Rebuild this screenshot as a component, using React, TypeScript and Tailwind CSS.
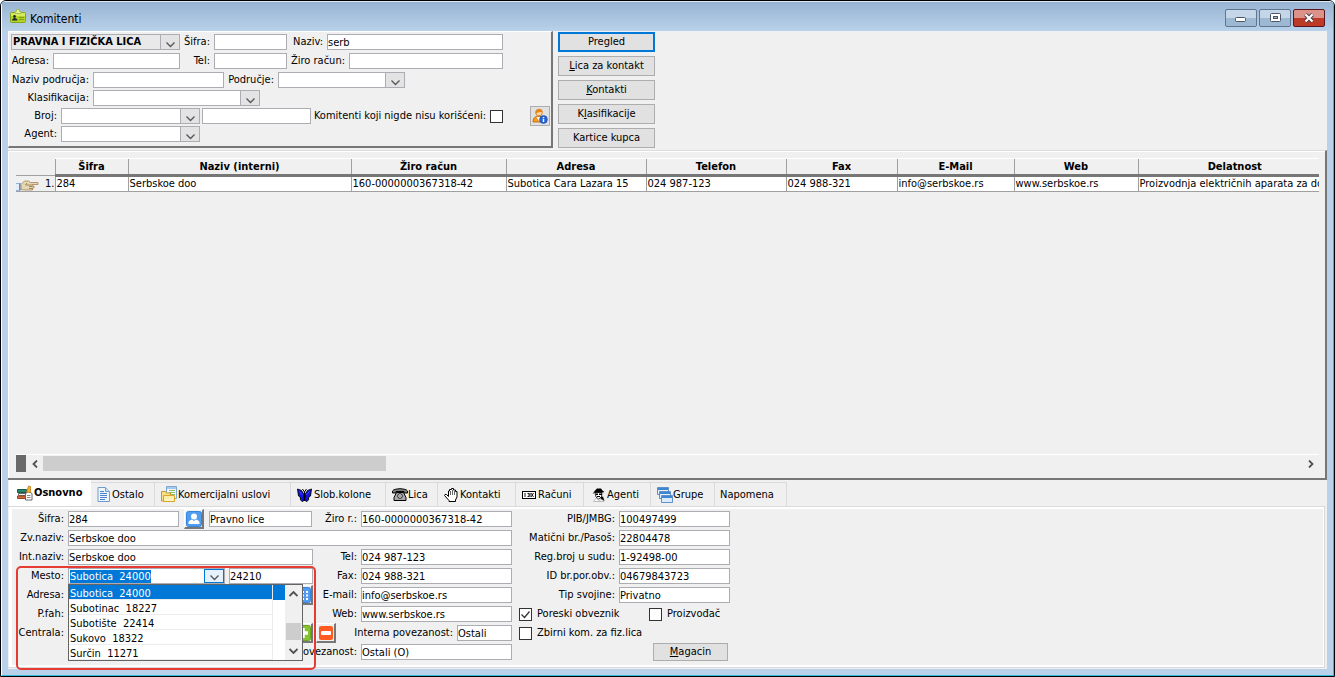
import { useEffect, useRef } from 'react';
import type { ReactNode } from 'react';

const fieldClass = 'h-4 min-w-0 border border-[#abadb3] bg-white p-0 text-[11px] leading-[14px] text-black outline-none';

const columns = [
  { title: 'Šifra', value: '284', width: 'w-[73px]' },
  { title: 'Naziv (interni)', value: 'Serbskoe doo', width: 'w-[223px]' },
  { title: 'Žiro račun', value: '160-0000000367318-42', width: 'w-[155px]' },
  { title: 'Adresa', value: 'Subotica Cara Lazara 15', width: 'w-[140px]' },
  { title: 'Telefon', value: '024 987-123', width: 'w-[140px]' },
  { title: 'Fax', value: '024 988-321', width: 'w-[111px]' },
  { title: 'E-Mail', value: 'info@serbskoe.rs', width: 'w-[117px]' },
  { title: 'Web', value: 'www.serbskoe.rs', width: 'w-[124px]' },
  { title: 'Delatnost', value: 'Proizvodnja električnih aparata za dom', width: '' },
];

const places = ['Subotica  24000', 'Subotinac  18227', 'Subotište  22414', 'Sukovo  18322', 'Surčin  11271'];

/* ---------- icons ---------- */

const CardIcon = () => (
  <svg width="16" height="15" viewBox="0 0 16 15">
    <rect x="0.500" y="3.500" width="15" height="10" rx="1" fill="#b4d423" stroke="#86a51c" />
    <rect x="1" y="4" width="14" height="3" fill="#d9ea5c" />
    <path d="M6.500 0.500h3v2h1.500v2H5v-2h1.500z" fill="#e6f09a" stroke="#9ab83a" strokeWidth="0.800" />
    <circle cx="4.500" cy="7.500" r="1.400" fill="#1c2b3a" />
    <path d="M2 11.500c0-3.500 5.500-3.500 5.500 0z" fill="#1c2b3a" />
    <path d="M9 8.500h5M9 10.500h5" stroke="#7d9c1c" />
  </svg>
);

const ChevronIcon = () => (
  <svg width="9" height="6" viewBox="0 0 9 6" fill="none" stroke="#555" strokeWidth="1.300">
    <path d="M0.500 0.500l4 4 4-4" />
  </svg>
);

const UserInfoIcon = () => (
  <svg width="16" height="16" viewBox="0 0 16 16">
    <path d="M1 14c0-5 3-6 6-6s5 1 5 6z" fill="#f79a1e" stroke="#b8650c" strokeWidth="0.800" />
    <path d="M4.500 9l2.500 4 2-4z" fill="#fff" />
    <circle cx="7" cy="4.500" r="3.300" fill="#fcd9a0" stroke="#c8781a" strokeWidth="0.800" />
    <path d="M3.500 5.500C2.500 0 11.500-0.500 10.600 5 9.500 2.800 6 4.500 3.500 5.500z" fill="#e8861a" />
    <circle cx="11.500" cy="11.500" r="3.900" fill="#2b66d9" stroke="#1a479f" strokeWidth="0.600" />
    <path d="M11.500 9v1.200M11.500 11v3" stroke="#fff" strokeWidth="1.400" />
  </svg>
);

const PointerIcon = () => (
  <svg width="24" height="12" viewBox="0 0 24 12">
    <path d="M0 4.500h3.500v7H0" fill="#e4eefb" stroke="#7aa3d8" strokeWidth="0.800" />
    <path d="M4 4v7.500" stroke="#3568b4" />
    <path d="M5 5.500L8.500 2h4l2 1.500h7.500v2h-6v1.500h2v2h-1.500v2H9L5 10.500z" fill="#e2d8b4" stroke="#b08d62" strokeWidth="0.900" />
    <path d="M11 4L9.500 6h6M13 7.500h3.500M13 9.500h3" fill="none" stroke="#a07a50" strokeWidth="0.900" />
  </svg>
);

const BooksIcon = () => (
  <svg width="16" height="16" viewBox="0 0 16 16">
    <path d="M0.500 4.500h9v3h-9z" fill="#27856e" stroke="#165c4a" />
    <path d="M1.500 8.500h8v2h-8z" fill="#f3f3f3" stroke="#666" />
    <path d="M0.500 11h9v2.500h-9z" fill="#d4693c" stroke="#9a4420" />
    <path d="M8.500 8.500l3-2 3.500 2v6.500H8.500z" fill="#fff" stroke="#666" />
    <path d="M10 10.500h3.500M10 12.500h3.500" stroke="#888" />
    <path d="M9.500 7l2-6 2 0.500v6z" fill="#f5b02a" stroke="#b47410" strokeWidth="0.700" />
  </svg>
);

const DocIcon = () => (
  <svg width="13" height="15" viewBox="0 0 13 15">
    <path d="M1 0.500h7.500l4 4v10H1z" fill="#eef5fd" stroke="#6f9bd0" />
    <path d="M8.500 0.500v4h4" fill="#c9def5" stroke="#6f9bd0" />
    <path d="M3 4.500h4M3 6.500h7M3 8.500h7M3 10.500h7M3 12.500h5" stroke="#4a83cc" />
  </svg>
);

const FolderDocIcon = () => (
  <svg width="17" height="17" viewBox="0 0 17 17">
    <path d="M5.500 0.500h10v12h-10z" fill="#f3f8fd" stroke="#7fa5cf" />
    <path d="M6 1h9v2H6z" fill="#a9c8ea" />
    <path d="M8 4.500h6M8 6.500h6M8 8.500h6" stroke="#8bbf6b" />
    <path d="M0.500 5.500h4l1 1.500h4v8h-9z" fill="#f8df8a" stroke="#c99a2a" />
    <path d="M2.500 9.500h11v6h-11z" fill="#fdeea8" stroke="#d9a52e" />
    <path d="M4 14h8" stroke="#fffbe0" />
  </svg>
);

const ButterflyIcon = () => (
  <svg width="15" height="14" viewBox="0 0 15 14">
    <path d="M0.500 1l4 1.500 2.500 4v6l-2 1-2-2.500 1-1-2.500-2z" fill="#1414e0" stroke="#000" strokeWidth="0.900" />
    <path d="M14.500 1l-4 1.500L8 6.500v6l2 1 2-2.500-1-1 2.500-2z" fill="#1414e0" stroke="#000" strokeWidth="0.900" />
    <path d="M7.500 4v9M5.500 1l2 3 2-3" fill="none" stroke="#000" />
    <path d="M2.500 3.500l3 3.500M12.500 3.500l-3 3.500" stroke="#4a4aff" />
  </svg>
);

const PhoneIcon = () => (
  <svg width="16" height="13" viewBox="0 0 16 13">
    <path d="M0.500 5V3C2 0 14 0 15.500 3v2h-3.500V3.500H4V5z" fill="#808080" stroke="#000" />
    <path d="M4.500 4.500h7l2.500 5v3H2v-3z" fill="#a8a8a8" stroke="#000" />
    <circle cx="8" cy="8" r="2.300" fill="#fff" stroke="#000" strokeWidth="0.900" />
    <circle cx="8" cy="8" r="0.700" />
  </svg>
);

const HandIcon = () => (
  <svg width="14" height="14" viewBox="0 0 14 14">
    <path
      d="M4.500 8.500l-2-2H1L0.500 7.500l4.500 5v1h6.500V12L13 9V3.500h-1.500V2h-2V0.500h-2v1h-2V3h-1z"
      fill="#fff"
      stroke="#000"
    />
    <path d="M6.500 3v4M8.500 2v5M10.500 3v4" stroke="#000" strokeWidth="0.600" />
  </svg>
);

const CounterIcon = () => (
  <svg width="14" height="8" viewBox="0 0 14 8" fill="none" stroke="#000">
    <rect x="0.500" y="0.500" width="13" height="7" fill="#fff" />
    <path d="M3 2v4M5.500 2.500h1.500v3H5.500M9 2l2.500 4M11.500 2L9 6M8 2v4" strokeWidth="0.900" />
  </svg>
);

const AgentIcon = () => (
  <svg width="13" height="14" viewBox="0 0 13 14">
    <path d="M3 4.500h7L9.500 9l-3 2L4 9z" fill="#fff" stroke="#000" strokeWidth="0.800" />
    <path d="M3 2.500L5 0.500h4l1.500 2 2 1.500-2 0.500H3L0.500 6z" fill="#000" />
    <path d="M3.500 5.500h2.500V7H4zM7 5.500h3V7H7z" fill="#000" />
    <path d="M8 9.500l3-1 1.500 4.500L9.500 11.500z" fill="#000" />
    <path d="M1.500 13.500L4 10l3 2.500 3-1 2 2z" fill="#fff" stroke="#999" strokeWidth="0.600" />
    <path d="M5 8.500h3" stroke="#000" />
  </svg>
);

const WindowsIcon = () => (
  <svg width="16" height="16" viewBox="0 0 16 16">
    <path d="M0.500 0.500h11v7h-11z" fill="#e8f1fb" stroke="#3b78bd" strokeWidth="0.800" />
    <path d="M1 1h10v2H1z" fill="#3f86d0" />
    <path d="M2.500 4.500h11v7h-11z" fill="#e8f1fb" stroke="#3b78bd" strokeWidth="0.800" />
    <path d="M3 5h10v2H3z" fill="#3f86d0" />
    <path d="M4.500 8.500h11v7h-11z" fill="#dcebfa" stroke="#3b78bd" strokeWidth="0.800" />
    <path d="M5 9h10v2H5z" fill="#3f86d0" />
  </svg>
);

const PersonBadge = () => (
  <svg width="16" height="16" viewBox="0 0 16 16">
    <rect x="0.500" y="0.500" width="15" height="15" rx="2" fill="#4f9cf0" stroke="#3584dc" />
    <circle cx="8" cy="5.500" r="3" fill="#fff" />
    <path d="M2.500 13V11.500c0-1.500 1.500-2.500 3.500-3l2 1.500 2-1.500c2 0.500 3.500 1.500 3.500 3V13z" fill="#fff" />
  </svg>
);

const GridBadge = () => (
  <svg width="16" height="16" viewBox="0 0 16 16">
    <rect x="0.500" y="0.500" width="15" height="15" rx="2" fill="#4f9cf0" stroke="#3584dc" />
    <path d="M3 4h2v2H3zM7 4h2v2H7zM11 4h2v2h-2zM3 7.500h2v2H3zM7 7.500h2v2H7zM11 7.500h2v2h-2zM3 11h2v2H3zM7 11h2v2H7zM11 11h2v2h-2z" fill="#fff" />
  </svg>
);

const PlusBadge = () => (
  <svg width="16" height="16" viewBox="0 0 16 16">
    <rect x="0.500" y="0.500" width="15" height="15" rx="2" fill="#86c232" stroke="#6ba51f" />
    <path d="M8 3v10M3 8h10" stroke="#fff" strokeWidth="3.500" />
  </svg>
);

const MinusBadge = () => (
  <svg width="16" height="16" viewBox="0 0 16 16">
    <rect x="1" y="1" width="14" height="14" rx="2" fill="#ff5a1f" />
    <rect x="3" y="6" width="10" height="4" rx="1" fill="#fff" />
  </svg>
);

/* ---------- controls ---------- */

type LabelProps = { htmlFor: string; className: string; children: ReactNode };

const Label = ({ htmlFor, className, children }: LabelProps) => (
  <label htmlFor={htmlFor} className={`shrink-0 whitespace-nowrap pr-1 text-right ${className}`}>
    {children}
  </label>
);

type FieldProps = { id: string; className: string; value?: string; label?: string };

const Field = ({ id, className, value = '', label }: FieldProps) => (
  <input id={id} type="text" defaultValue={value} aria-label={label} className={`${fieldClass} ${className}`} />
);

const Combo = ({ id, className, value = '', label }: FieldProps) => (
  <div className={`relative shrink-0 ${className}`}>
    <select
      id={id}
      aria-label={label}
      className={
        value
          ? 'block h-4 w-full appearance-none border border-[#abadb3] bg-[#e9e9e9] pl-px text-[11px] font-bold leading-[14px] outline-none'
          : 'block h-4 w-full appearance-none border border-[#abadb3] bg-white text-[11px] leading-[14px] outline-none'
      }
    >
      <option>{value}</option>
    </select>
    <span className="pointer-events-none absolute inset-y-0 right-0 flex w-5 items-end justify-center border border-[#abadb3] bg-[#e3e3e3] pb-px">
      <ChevronIcon />
    </span>
  </div>
);

const Check = ({ id, checked = false }: { id: string; checked?: boolean }) => (
  <span className="relative flex h-[13px] w-[13px] shrink-0">
    <input
      id={id}
      type="checkbox"
      defaultChecked={checked}
      className="peer h-[13px] w-[13px] appearance-none border border-[#333] bg-white"
    />
    <svg
      className="pointer-events-none absolute inset-0 hidden peer-checked:block"
      width="13"
      height="13"
      viewBox="0 0 13 13"
      fill="none"
      stroke="#333"
      strokeWidth="1.300"
    >
      <path d="M2.500 6.500l3 3 5-6" />
    </svg>
  </span>
);

const IconButton = ({ label, children }: { label: string; children: ReactNode }) => (
  <button
    type="button"
    aria-label={label}
    className="flex h-5 w-5 shrink-0 items-center justify-center border-b-2 border-l border-r-2 border-t border-b-[#777] border-l-white border-r-[#777] border-t-white bg-[#f0f0f0]"
  >
    {children}
  </button>
);

/* ---------- sections ---------- */

const TitleBar = () => (
  <header className="flex h-[29px] shrink-0 items-center bg-gradient-to-b from-[#98b4d2] to-[#b9d1ea] pl-2 pr-2">
    <CardIcon />
    <h1 className="flex-1 pl-1 pt-1 text-[12px] leading-4">Komitenti</h1>
    <div className="flex gap-[2px] pt-[2px]">
      <button
        type="button"
        aria-label="Minimize"
        className="flex h-[18px] w-8 items-center justify-center rounded-[2px] border border-[#5f7590] bg-gradient-to-b from-[#c5d6e9] from-50% to-[#9db8d2] to-50% pt-1"
      >
        <svg width="12" height="5" viewBox="0 0 12 5">
          <rect x="0.500" y="0.500" width="10" height="4" rx="1" fill="#fff" stroke="#4c5563" />
        </svg>
      </button>
      <button
        type="button"
        aria-label="Maximize"
        className="flex h-[18px] w-8 items-center justify-center rounded-[2px] border border-[#5f7590] bg-gradient-to-b from-[#c5d6e9] from-50% to-[#9db8d2] to-50%"
      >
        <svg width="11" height="9" viewBox="0 0 11 9">
          <rect x="0.500" y="0.500" width="10" height="8" rx="1" fill="#fff" stroke="#4c5563" />
          <rect x="3.500" y="3.500" width="4" height="2" fill="#9db8d2" stroke="#4c5563" />
        </svg>
      </button>
      <button
        type="button"
        aria-label="Close"
        className="flex h-[18px] w-8 items-center justify-center rounded-[2px] border border-[#5a1620] bg-gradient-to-b from-[#dc9289] from-50% to-[#bd3a26] to-50%"
      >
        <svg width="12" height="10" viewBox="0 0 12 10">
          <path d="M2.500 1.500l7 7M9.500 1.500l-7 7" stroke="#4c3a48" strokeWidth="4" />
          <path d="M2.500 1.500l7 7M9.500 1.500l-7 7" stroke="#fff" strokeWidth="2.200" />
        </svg>
      </button>
    </div>
  </header>
);

const SearchPanel = () => (
  <form className="flex w-[545px] border-b-2 border-l border-r-2 border-t border-b-[#777] border-l-white border-r-[#777] border-t-white pb-1 pl-[2px] pt-[2px]">
    <div className="flex flex-1 flex-col gap-[2px]">
      <div className="flex flex-col gap-[3px]">
        <div className="flex h-4 items-center">
          <Combo id="vrsta" className="w-[169px]" value="PRAVNA I FIZIČKA LICA" label="Vrsta lica" />
          <Label htmlFor="f-sifra" className="w-[34px]">Šifra:</Label>
          <Field id="f-sifra" className="w-[73px]" />
          <Label htmlFor="f-naziv" className="w-10">Naziv:</Label>
          <Field id="f-naziv" className="w-44" value="serb" />
        </div>
        <div className="flex h-4 items-center">
          <Label htmlFor="f-adresa" className="w-[42px]">Adresa:</Label>
          <Field id="f-adresa" className="w-[127px]" />
          <Label htmlFor="f-tel" className="w-[34px]">Tel:</Label>
          <Field id="f-tel" className="w-[73px]" />
          <Label htmlFor="f-ziro" className="w-[62px]">Žiro račun:</Label>
          <Field id="f-ziro" className="w-[154px]" />
        </div>
        <div className="flex h-4 items-center">
          <Label htmlFor="f-nazpod" className="w-[82px]">Naziv područja:</Label>
          <Field id="f-nazpod" className="w-[131px]" />
          <Label htmlFor="f-podrucje" className="w-[54px]">Područje:</Label>
          <Combo id="f-podrucje" className="w-[127px]" />
        </div>
      </div>
      <div className="flex h-4 items-center">
        <Label htmlFor="f-klas" className="w-[82px]">Klasifikacija:</Label>
        <Combo id="f-klas" className="w-[167px]" />
      </div>
      <div className="flex h-4 items-center">
        <Label htmlFor="f-broj" className="w-[50px]">Broj:</Label>
        <Combo id="f-broj" className="w-[139px]" />
        <Field id="f-broj2" className="ml-[2px] w-[109px]" label="Broj do" />
        <Label htmlFor="f-nigde" className="w-[179px]">Komitenti koji nigde nisu korišćeni:</Label>
        <Check id="f-nigde" />
      </div>
      <div className="flex h-4 items-center">
        <Label htmlFor="f-agent" className="w-[50px]">Agent:</Label>
        <Combo id="f-agent" className="w-[139px]" />
      </div>
    </div>
    <button
      type="button"
      aria-label="Podaci o komitentu"
      className="mb-4 mr-px flex h-5 w-5 items-center justify-center self-end border border-[#adadad] bg-[#e1e1e1]"
    >
      <UserInfoIcon />
    </button>
  </form>
);

const actionClass = 'h-5 w-[97px] border border-[#adadad] bg-[#e1e1e1] text-center leading-4';

const Actions = () => (
  <div className="flex flex-col gap-1 pl-[5px] pt-px">
    <button type="button" className="h-5 w-[97px] border-2 border-[#0078d7] bg-[#e1e1e1] text-center leading-4">Pregled</button>
    <button type="button" className={actionClass}><u>L</u>ica za kontakt</button>
    <button type="button" className={actionClass}><u>K</u>ontakti</button>
    <button type="button" className={actionClass}>K<u>l</u>asifikacije</button>
    <button type="button" className={actionClass}>Kartice kupca</button>
  </div>
);

const ResultGrid = () => (
  <section className="flex min-h-[120px] flex-1 flex-col border-b-2 border-r-2 border-t border-b-[#777] border-r-[#777] border-t-[#dcdcdc]">
    <div className="flex flex-1 flex-col border-l border-t border-white pb-[6px] pl-[7px] pr-[6px] pt-[6px]">
      <div className="flex-1 overflow-hidden">
        <table className="w-full table-fixed border-collapse">
          <thead>
            <tr className="h-[17px]">
              <th className="w-[39px] border-b border-[#a0a0a0] p-0" aria-label="Red" />
              {columns.map((col) => (
                <th
                  key={col.title}
                  className={`${col.width} border-b-[3px] border-l border-t border-b-[#777] border-l-[#a0a0a0] border-t-white p-0 text-center font-bold leading-[13px] last:pl-3`}
                >
                  {col.title}
                </th>
              ))}
            </tr>
          </thead>
          <tbody>
            <tr className="h-4">
              <td className="border-b border-[#a0a0a0] p-0">
                <div className="flex items-end justify-between">
                  <PointerIcon />
                  <span className="leading-[14px]">1.</span>
                </div>
              </td>
              {columns.map((col) => (
                <td
                  key={col.title}
                  className="overflow-hidden whitespace-nowrap border-b border-l border-[#a0a0a0] bg-white p-0 pl-px leading-[14px]"
                >
                  {col.value}
                </td>
              ))}
            </tr>
          </tbody>
        </table>
      </div>
      <div className="flex h-[18px] items-center border-t border-white">
        <span className="h-[17px] w-[10px] bg-[#696969]" />
        <button type="button" aria-label="Pomeri levo" className="flex h-4 w-[17px] items-center justify-center">
          <svg width="6" height="8" viewBox="0 0 6 8" fill="none" stroke="#505050" strokeWidth="1.800">
            <path d="M5 0.500L1.500 4 5 7.500" />
          </svg>
        </button>
        <div className="flex-1">
          <div className="h-[15px] w-3/11 bg-[#cdcdcd]" />
        </div>
        <button type="button" aria-label="Pomeri desno" className="flex h-4 w-[17px] items-center justify-center">
          <svg width="6" height="8" viewBox="0 0 6 8" fill="none" stroke="#505050" strokeWidth="1.800">
            <path d="M1 0.500L4.500 4 1 7.500" />
          </svg>
        </button>
      </div>
    </div>
  </section>
);

const tabs = [
  { name: 'Ostalo', icon: <DocIcon />, className: 'w-16 gap-[2px] pl-[6px]' },
  { name: 'Komercijalni uslovi', icon: <FolderDocIcon />, className: 'w-[136px] pl-[6px]' },
  { name: 'Slob.kolone', icon: <ButterflyIcon />, className: 'w-[95px] gap-[2px] pl-[6px]' },
  { name: 'Lica', icon: <PhoneIcon />, className: 'w-[52px] pl-[6px]' },
  { name: 'Kontakti', icon: <HandIcon />, className: 'w-[78px] gap-[2px] pl-[6px]' },
  { name: 'Računi', icon: <CounterIcon />, className: 'w-[68px] gap-[2px] pl-[6px]' },
  { name: 'Agenti', icon: <AgentIcon />, className: 'w-[67px] gap-[2px] pl-[8px]' },
  { name: 'Grupe', icon: <WindowsIcon />, className: 'w-16 pl-[6px]' },
  { name: 'Napomena', icon: null, className: 'w-[72px] pl-[5px]' },
];

const TabBar = () => (
  <div role="tablist" className="flex h-[26px] items-end pl-px">
    <button type="button" role="tab" aria-selected="true" className="flex h-[26px] w-[82px] items-center gap-px bg-white pl-2 font-bold">
      <BooksIcon />
      <span>Osnovno</span>
    </button>
    {tabs.map((tab) => (
      <button
        key={tab.name}
        type="button"
        role="tab"
        aria-selected="false"
        className={`flex h-6 shrink-0 items-center whitespace-nowrap border-r border-t border-[#dadada] ${tab.className}`}
      >
        {tab.icon}
        <span>{tab.name}</span>
      </button>
    ))}
  </div>
);

const PlacePicker = () => {
  const inputRef = useRef<HTMLInputElement>(null);

  useEffect(() => {
    inputRef.current?.focus();
    inputRef.current?.select();
  }, []);

  return (
    <div className="relative flex h-4 w-[157px] shrink-0 border border-[#abadb3] bg-white">
      <input
        id="mesto"
        ref={inputRef}
        type="text"
        role="combobox"
        aria-expanded="true"
        aria-controls="mesto-lista"
        defaultValue="Subotica  24000"
        className="h-[14px] min-w-0 flex-1 bg-white pb-0 pl-px pt-px text-[11px] leading-[13px] outline-none selection:bg-[#0078d7] selection:text-white"
      />
      <button
        type="button"
        aria-label="Otvori listu"
        className="flex h-[14px] w-5 items-end justify-center border border-[#0078d7] bg-[#e5f1fb] pb-px"
      >
        <ChevronIcon />
      </button>
      <div className="absolute -left-px top-[15px] z-10 flex w-[235px] border border-[#646464] bg-white">
        <ul id="mesto-lista" role="listbox" aria-label="Mesto" className="flex-1">
          {places.map((place, i) => (
            <li
              key={place}
              role="option"
              aria-selected={i === 0}
              className={`flex h-[15px] whitespace-pre leading-[15px] ${i === 0 ? 'bg-[#0078d7] text-white' : ''}`}
            >
              <span className="flex-1 border-b border-r border-[#ececec] pl-px pt-px">{place}</span>
              <span className="w-3" />
            </li>
          ))}
        </ul>
        <div className="flex w-[17px] flex-col items-center bg-[#f0f0f0] py-[6px]">
          <svg width="9" height="6" viewBox="0 0 9 6" fill="none" stroke="#505050" strokeWidth="1.800">
            <path d="M0.500 5l4-4 4 4" />
          </svg>
          <span className="mt-[26px] h-[17px] w-[15px] bg-[#cdcdcd]" />
          <svg className="mt-auto" width="9" height="6" viewBox="0 0 9 6" fill="none" stroke="#505050" strokeWidth="1.800">
            <path d="M0.500 1l4 4 4-4" />
          </svg>
        </div>
      </div>
    </div>
  );
};

const rowClass = 'flex h-4 items-center';

const CustomerDetails = () => (
  <div className="relative flex flex-col gap-[3px]">
    <div className={rowClass}>
      <Label htmlFor="sifra" className="w-14">Šifra:</Label>
      <Field id="sifra" className="w-[111px]" value="284" />
      <div className="flex w-[30px] shrink-0 justify-center">
        <IconButton label="Vrsta lica"><PersonBadge /></IconButton>
      </div>
      <Field id="lice" className="w-[103px]" value="Pravno lice" label="Lice" />
      <Label htmlFor="ziro" className="w-[49px]">Žiro r.:</Label>
      <Field id="ziro" className="w-[151px]" value="160-0000000367318-42" />
    </div>
    <div className={rowClass}>
      <Label htmlFor="zvnaziv" className="w-14">Zv.naziv:</Label>
      <Field id="zvnaziv" className="flex-1" value="Serbskoe doo" />
    </div>
    <div className={rowClass}>
      <Label htmlFor="intnaziv" className="w-14">Int.naziv:</Label>
      <Field id="intnaziv" className="w-[245px]" value="Serbskoe doo" />
      <Label htmlFor="tel" className="w-12">Tel:</Label>
      <Field id="tel" className="w-[151px]" value="024 987-123" />
    </div>
    <div className={rowClass}>
      <Label htmlFor="mesto" className="w-14">Mesto:</Label>
      <PlacePicker />
      <Field id="ptt" className="ml-1 w-[84px]" value="24210" label="Poštanski broj" />
      <Label htmlFor="fax" className="w-12">Fax:</Label>
      <Field id="fax" className="w-[151px]" value="024 988-321" />
    </div>
    <div className={rowClass}>
      <Label htmlFor="adresa" className="w-14">Adresa:</Label>
      <Field id="adresa" className="w-[225px]" />
      <IconButton label="Adrese"><GridBadge /></IconButton>
      <Label htmlFor="email" className="w-12">E-mail:</Label>
      <Field id="email" className="w-[151px]" value="info@serbskoe.rs" />
    </div>
    <div className={rowClass}>
      <Label htmlFor="pfah" className="w-14">P.fah:</Label>
      <Field id="pfah" className="w-[111px]" />
      <Label htmlFor="web" className="ml-auto w-12">Web:</Label>
      <Field id="web" className="w-[151px]" value="www.serbskoe.rs" />
    </div>
    <div className={rowClass}>
      <Label htmlFor="centrala" className="w-14">Centrala:</Label>
      <Field id="centrala" className="w-[225px]" />
      <IconButton label="Dodaj centralu"><PlusBadge /></IconButton>
      <div className="ml-[3px] flex">
        <IconButton label="Ukloni centralu"><MinusBadge /></IconButton>
      </div>
      <Label htmlFor="interna" className="flex-1">Interna povezanost:</Label>
      <Field id="interna" className="w-[55px]" value="Ostali" />
    </div>
    <div className={rowClass}>
      <Label htmlFor="povezanost" className="flex-1">povezanost:</Label>
      <Field id="povezanost" className="w-[151px]" value="Ostali (O)" />
    </div>
    {/* highlight around the place picker */}
    <div className="pointer-events-none absolute -bottom-[10px] left-1 top-[55px] z-20 w-[300px] rounded-[5px] border-2 border-[#e53b32]" />
  </div>
);

const registry = [
  { id: 'pib', label: 'PIB/JMBG:', value: '100497499' },
  { id: 'maticni', label: 'Matični br./Pasoš:', value: '22804478' },
  { id: 'sud', label: 'Reg.broj u sudu:', value: '1-92498-00' },
  { id: 'idbr', label: 'ID br.por.obv.:', value: '04679843723' },
  { id: 'svojina', label: 'Tip svojine:', value: 'Privatno' },
];

const RegistryDetails = () => (
  <div className="flex w-[218px] flex-col gap-[3px]">
    {registry.map((item) => (
      <div key={item.id} className={rowClass}>
        <Label htmlFor={item.id} className="w-[107px]">{item.label}</Label>
        <Field id={item.id} className="w-[111px]" value={item.value} />
      </div>
    ))}
    <div className={`${rowClass} pl-[7px]`}>
      <Check id="poreski" checked />
      <label htmlFor="poreski" className="w-[117px] whitespace-nowrap pl-[5px]">Poreski obveznik</label>
      <Check id="proizvodjac" />
      <label htmlFor="proizvodjac" className="whitespace-nowrap pl-[5px]">Proizvođač</label>
    </div>
    <div className={`${rowClass} pl-[7px]`}>
      <Check id="zbirni" />
      <label htmlFor="zbirni" className="whitespace-nowrap pl-[5px]">Zbirni kom. za fiz.lica</label>
    </div>
    <div className={`${rowClass} justify-end pr-[2px]`}>
      <button type="button" className="h-[18px] w-[75px] shrink-0 border border-[#adadad] bg-[#e1e1e1] leading-4">
        <u>M</u>agacin
      </button>
    </div>
  </div>
);

export default function App() {
  return (
    <div className="flex min-h-screen flex-col rounded-t-[6px] border border-black bg-[#b9d1ea] font-['DejaVu_Sans_Condensed','Noto_Sans',sans-serif] text-[11px] leading-[14px] text-black">
      <div className="flex flex-1 flex-col rounded-t-[5px] border border-b-[#2fb9dc] border-l-white border-r-[#2fb9dc] border-t-[#dfe8f2]">
        <TitleBar />
        <main className="flex flex-1 flex-col px-[6px] pb-[6px]">
          <div className="flex flex-1 flex-col bg-[#f0f0f0]">
            <div className="flex h-[119px] items-start">
              <SearchPanel />
              <Actions />
            </div>
            <ResultGrid />
            <section className="pb-px pr-[2px]">
              <TabBar />
              <div className="border-b border-r border-t border-[#dadada] pl-px">
                <div className="flex border-b-2 border-l-[3px] border-r border-t-2 border-white pb-[5px] pt-[2px]">
                  <CustomerDetails />
                  <RegistryDetails />
                </div>
              </div>
            </section>
          </div>
        </main>
      </div>
    </div>
  );
}
